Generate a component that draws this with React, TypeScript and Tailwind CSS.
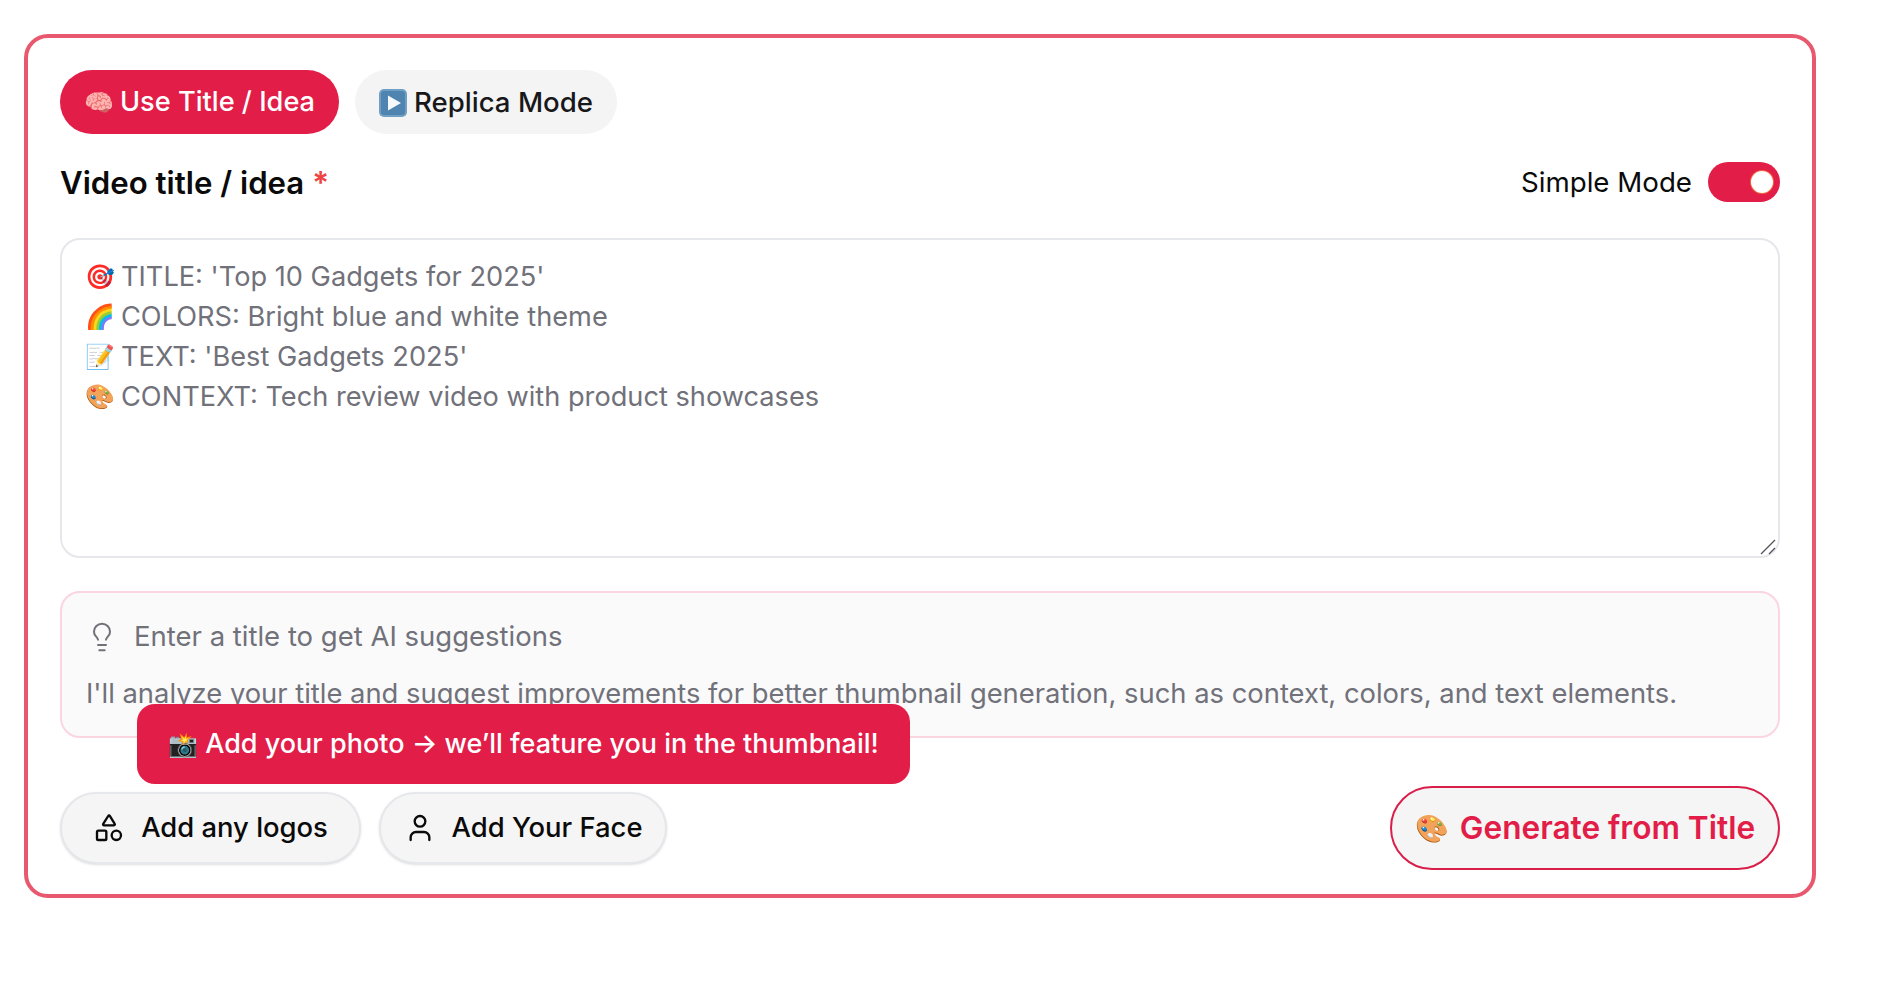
import type { ReactNode } from "react"
import { Lightbulb, Shapes, User } from "lucide-react"

const promptLines = [
  { emoji: "🎯", text: "TITLE: 'Top 10 Gadgets for 2025'" },
  { emoji: "🌈", text: "COLORS: Bright blue and white theme" },
  { emoji: "📝", text: "TEXT: 'Best Gadgets 2025'" },
  { emoji: "🎨", text: "CONTEXT: Tech review video with product showcases" },
]

function Emoji({ children }: { children: ReactNode }) {
  return <span className="text-[24px] leading-none">{children}</span>
}

function PlayTile() {
  return (
    <svg width="28" height="28" viewBox="0 0 28 28">
      <rect width="28" height="28" rx="5" fill="#6f9fc4" />
      <rect x="2" y="2" width="24" height="24" rx="3" fill="#4f84b0" />
      <path d="M9 6.5 L22 14 L9 21.5 Z" fill="#f4f8fb" />
    </svg>
  )
}

export default function App() {
  return (
    <div className="min-h-screen bg-white pl-6 pt-[34px] font-['Inter',sans-serif]">
      <div className="w-[1792px] rounded-[24px] border-4 border-[#e8586f] px-8 pt-8 pb-6">
        {/* Mode tabs */}
        <div className="flex gap-4">
          <button className="flex h-16 w-[279px] items-center justify-center gap-[6px] rounded-full bg-[#e11d48] pt-px text-[27.2px] font-medium text-white">
            <Emoji>🧠</Emoji>
            Use Title / Idea
          </button>
          <button className="flex h-16 w-[262px] items-center justify-center gap-[7px] rounded-full bg-[#f4f4f5] pt-px text-[27.6px] font-medium text-[#18181b]">
            <PlayTile />
            Replica Mode
          </button>
        </div>

        {/* Title row */}
        <div className="mt-7 flex h-10 items-center justify-between">
          <div className="pt-0.5 text-[31.2px] font-semibold text-[#0a0a0a]">
            Video title / idea <span className="text-[#ef4444]">*</span>
          </div>
          <div className="flex items-center gap-4">
            <span className="pt-0.5 text-[27.7px] text-[#0a0a0a]">Simple Mode</span>
            <div className="flex h-10 w-[72px] items-center justify-end rounded-full bg-[#e11d48] pr-[7px]">
              <div className="size-[22px] rounded-full bg-white ring-1 ring-[#f3663f]" />
            </div>
          </div>
        </div>

        {/* Prompt */}
        <div className="relative mt-9">
          <textarea
            aria-label="Video title or idea"
            className="block h-[320px] w-full resize-none rounded-[20px] border-2 border-[#e5e7eb] bg-white"
          />
          <div className="pointer-events-none absolute left-[25px] top-[19px] text-[27.2px] leading-10 text-[#71717a]">
            {promptLines.map((line) => (
              <div key={line.text} className="flex items-center gap-[6px]">
                <Emoji>{line.emoji}</Emoji>
                <span>{line.text}</span>
              </div>
            ))}
          </div>
          <svg className="pointer-events-none absolute right-1 bottom-[3px]" width="16" height="16" viewBox="0 0 16 16" stroke="#52525b" strokeWidth="1.25">
            <path d="M1 15 L15 1" />
            <path d="M9 15 L15 9" />
          </svg>
        </div>

        {/* AI suggestions */}
        <div className="mt-[33px] h-[147px] rounded-[20px] border-2 border-[#fbd5e0] bg-[#fafafa] px-6 pt-6">
          <div className="flex h-10 items-center gap-4 text-[#71717a]">
            <Lightbulb className="size-8 shrink-0" strokeWidth={1.5} />
            <span className="text-[27.5px]">Enter a title to get AI suggestions</span>
          </div>
          <p className="mt-4 text-[27.36px] leading-10 text-[#71717a]">
            I'll analyze your title and suggest improvements for better thumbnail generation, such as context, colors, and text elements.
          </p>
        </div>

        {/* Actions */}
        <div className="relative mt-12 flex items-center justify-between">
          <div className="absolute left-[77px] top-[-82px] flex h-20 w-[773px] items-center justify-center gap-[7px] rounded-[18px] bg-[#e11d48] pt-px text-[27px] font-medium text-white">
            <Emoji>📸</Emoji>
            Add your photo → we’ll feature you in the thumbnail!
          </div>
          <div className="flex gap-[18px]">
            <button className="flex h-[72px] w-[301px] items-center justify-center gap-4 rounded-full border-2 border-[#e5e7eb] bg-[#f5f5f5] text-[27.4px] font-medium text-[#0a0a0a] shadow-sm">
              <Shapes className="size-8" strokeWidth={1.75} />
              Add any logos
            </button>
            <button className="flex h-[72px] w-[288px] items-center justify-center gap-4 rounded-full border-2 border-[#e5e7eb] bg-[#f5f5f5] text-[27.4px] font-medium text-[#0a0a0a] shadow-sm">
              <User className="size-8" strokeWidth={1.75} />
              Add Your Face
            </button>
          </div>
          <button className="flex h-[84px] w-[390px] items-center justify-center gap-[11px] rounded-full border-2 border-[#d91e4a] bg-[#f5f5f5] text-[31.6px] font-semibold text-[#e11d48]">
            <span className="text-[27px] leading-none">🎨</span>
            Generate from Title
          </button>
        </div>
      </div>
    </div>
  )
}
